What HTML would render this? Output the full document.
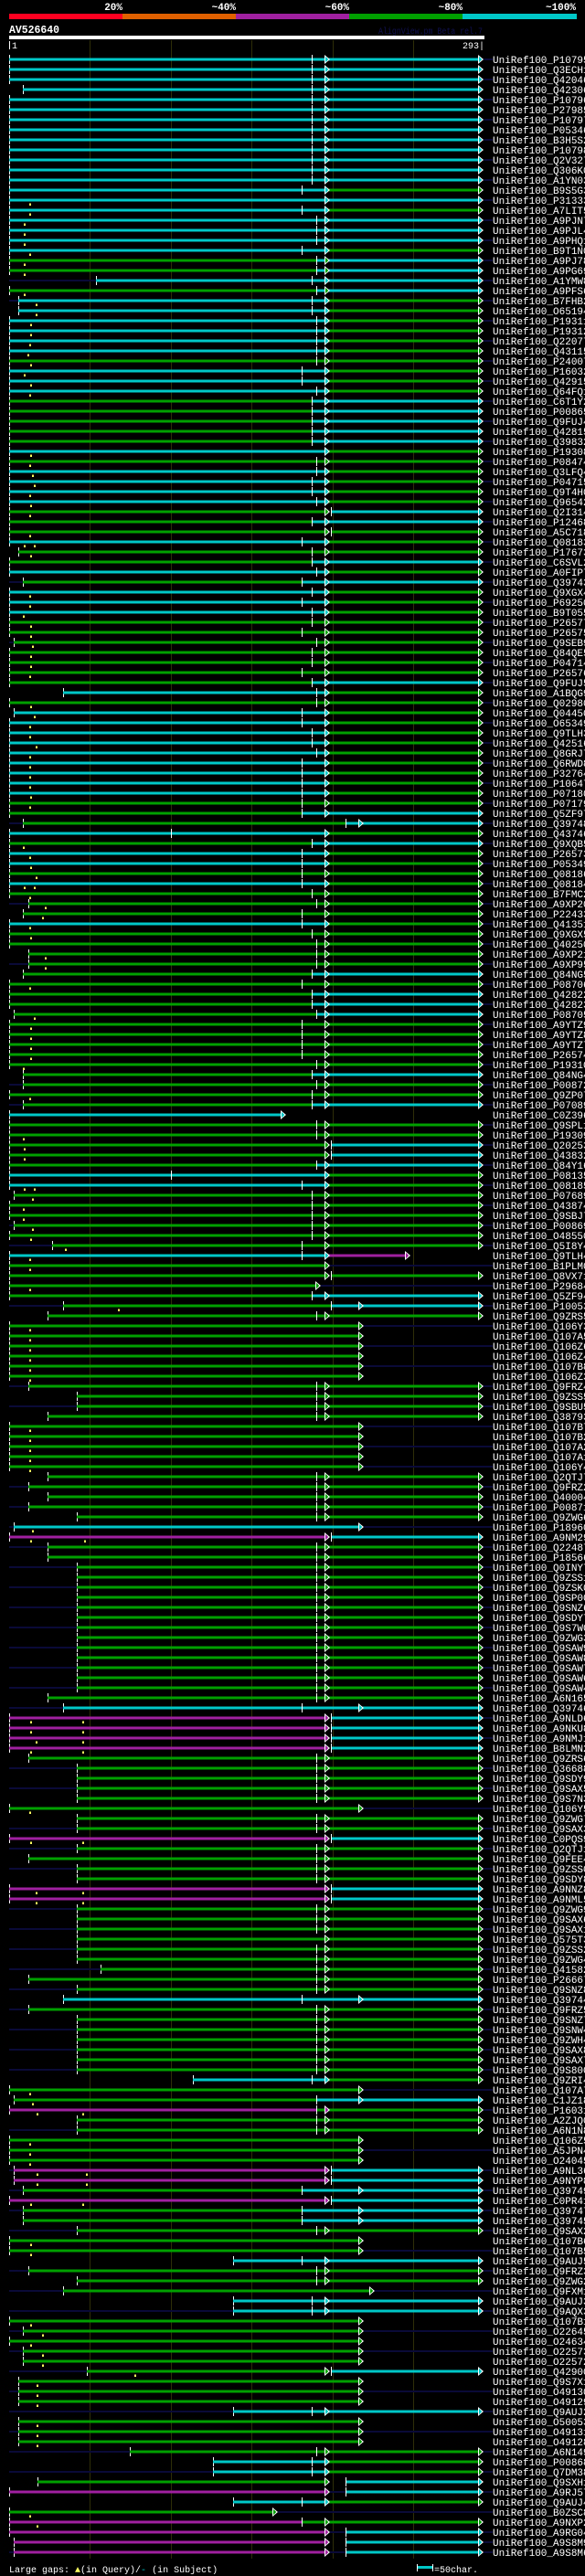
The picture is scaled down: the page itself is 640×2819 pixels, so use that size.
<!DOCTYPE html>
<html><head><meta charset="utf-8"><style>
html,body{margin:0;padding:0;background:#000;width:640px;height:2819px;overflow:hidden}
body{position:relative}
#rows{position:absolute;left:0;top:60px;width:640px}
#rows svg{display:block;width:640px;height:11px;overflow:visible}
path{fill:none}
.c{stroke:#00c8c8;stroke-width:3}
.g{stroke:#00a000;stroke-width:3}
.m{stroke:#a020a0;stroke-width:3}
.n{stroke:#0a0a38;stroke-width:2}
text{font-family:"Liberation Mono",monospace;font-size:11px;fill:#fff}
</style></head><body>
<svg width="0" height="0" style="position:absolute"><defs>
<rect id="t" x="0" y="-5" width="1" height="10" fill="#fff"/>
<g id="ac"><polygon points="0,-5 6,0 0,5" fill="#fff"/><polygon points="1,-3.3 4.3,0 1,3.3" fill="#00c8c8"/></g>
<g id="ag"><polygon points="0,-5 6,0 0,5" fill="#fff"/><polygon points="1,-3.3 4.3,0 1,3.3" fill="#00a000"/></g>
<g id="am"><polygon points="0,-5 6,0 0,5" fill="#fff"/><polygon points="1,-3.3 4.3,0 1,3.3" fill="#a020a0"/></g>
<g id="y"><rect x="0.5" y="3" width="1" height="1" fill="#ffff60"/><rect x="0" y="4" width="2" height="2" fill="#ffff60"/></g>
</defs></svg>

<svg style="position:absolute;left:0;top:0" width="640" height="2819">
<g font-family="Liberation Mono,monospace" font-weight="bold" font-size="11" fill="#fff" text-anchor="end">
<text x="134" y="11" style="font-weight:bold">20%</text>
<text x="258" y="11" style="font-weight:bold">~40%</text>
<text x="382" y="11" style="font-weight:bold">~60%</text>
<text x="506" y="11" style="font-weight:bold">~80%</text>
<text x="630" y="11" style="font-weight:bold">~100%</text>
</g>
<rect x="10" y="15" width="124" height="6" fill="#ff0020"/>
<rect x="134" y="15" width="124" height="6" fill="#e06000"/>
<rect x="258" y="15" width="124" height="6" fill="#a020a0"/>
<rect x="382" y="15" width="124" height="6" fill="#00a000"/>
<rect x="506" y="15" width="125" height="6" fill="#00c8c8"/>
<text x="10" y="36" style="font-weight:bold;font-size:12px" textLength="55" lengthAdjust="spacingAndGlyphs">AV526640</text>
<text x="414" y="37" style="fill:#101050;font-size:10px" textLength="114" lengthAdjust="spacingAndGlyphs">AlignView.pm Beta rel.7</text>
<rect x="10" y="39" width="520" height="4" fill="#fff"/>
<rect x="10" y="45" width="1" height="9" fill="#fff"/>
<text x="13" y="53" style="font-size:10px">1</text>
<text x="530" y="53" style="font-size:10px" text-anchor="end">293|</text>
<g stroke="#2e2e08" stroke-width="1">
<path d="M98.5 44V2800M187.5 44V2800M275.5 44V2800M364.5 44V2800M452.5 44V2800"/>
</g>
<text x="10" y="2815" style="font-size:10px">Large gaps: <tspan fill="#ffff60">▲</tspan>(in Query)/<tspan fill="#00c8c8">-</tspan> (in Subject)</text>
<rect x="456" y="2806" width="1" height="8" fill="#fff"/><rect x="473" y="2806" width="1" height="8" fill="#fff"/>
<rect x="457" y="2808" width="16" height="3" fill="#00c8c8"/>
<text x="475" y="2815" style="font-size:10px">=50char.</text>
</svg>

<div id="rows">
<svg viewBox="0 -5 640 11"><use href="#t" x="10"/><path class="c" d="M10 0H355M357 0H523"/><use href="#t" x="341"/><use href="#ac" x="355"/><use href="#ac" x="523"/><path class="n" d="M529 0H539"/><text x="539" y="4">UniRef100_P10795</text></svg>
<svg viewBox="0 -5 640 11"><use href="#t" x="10"/><path class="c" d="M10 0H355M357 0H523"/><use href="#t" x="341"/><use href="#ac" x="355"/><use href="#ac" x="523"/><text x="539" y="4">UniRef100_Q3ECH1</text></svg>
<svg viewBox="0 -5 640 11"><use href="#t" x="10"/><path class="c" d="M10 0H355M357 0H523"/><use href="#t" x="341"/><use href="#ac" x="355"/><use href="#ac" x="523"/><path class="n" d="M529 0H539"/><text x="539" y="4">UniRef100_Q42046</text></svg>
<svg viewBox="0 -5 640 11"><use href="#t" x="25"/><path class="c" d="M25 0H355M357 0H523"/><use href="#t" x="341"/><use href="#ac" x="355"/><use href="#ac" x="523"/><text x="539" y="4">UniRef100_Q42306</text></svg>
<svg viewBox="0 -5 640 11"><use href="#t" x="10"/><path class="c" d="M10 0H355M357 0H523"/><use href="#t" x="341"/><use href="#ac" x="355"/><use href="#ac" x="523"/><path class="n" d="M529 0H539"/><text x="539" y="4">UniRef100_P10796</text></svg>
<svg viewBox="0 -5 640 11"><use href="#t" x="10"/><path class="c" d="M10 0H355M357 0H523"/><use href="#t" x="341"/><use href="#ac" x="355"/><use href="#ac" x="523"/><text x="539" y="4">UniRef100_P27985</text></svg>
<svg viewBox="0 -5 640 11"><use href="#t" x="10"/><path class="c" d="M10 0H355M357 0H523"/><use href="#t" x="341"/><use href="#ac" x="355"/><use href="#ac" x="523"/><path class="n" d="M529 0H539"/><text x="539" y="4">UniRef100_P10797</text></svg>
<svg viewBox="0 -5 640 11"><use href="#t" x="10"/><path class="c" d="M10 0H355M357 0H523"/><use href="#t" x="341"/><use href="#ac" x="355"/><use href="#ac" x="523"/><text x="539" y="4">UniRef100_P05346</text></svg>
<svg viewBox="0 -5 640 11"><use href="#t" x="10"/><path class="c" d="M10 0H355M357 0H523"/><use href="#t" x="341"/><use href="#ac" x="355"/><use href="#ac" x="523"/><path class="n" d="M529 0H539"/><text x="539" y="4">UniRef100_B3H5S2</text></svg>
<svg viewBox="0 -5 640 11"><use href="#t" x="10"/><path class="c" d="M10 0H355M357 0H523"/><use href="#t" x="341"/><use href="#ac" x="355"/><use href="#ac" x="523"/><text x="539" y="4">UniRef100_P10798</text></svg>
<svg viewBox="0 -5 640 11"><use href="#t" x="10"/><path class="c" d="M10 0H355M357 0H523"/><use href="#t" x="341"/><use href="#ac" x="355"/><use href="#ac" x="523"/><path class="n" d="M529 0H539"/><text x="539" y="4">UniRef100_Q2V327</text></svg>
<svg viewBox="0 -5 640 11"><use href="#t" x="10"/><path class="c" d="M10 0H355M357 0H523"/><use href="#t" x="341"/><use href="#ac" x="355"/><use href="#ac" x="523"/><text x="539" y="4">UniRef100_Q306K0</text></svg>
<svg viewBox="0 -5 640 11"><use href="#t" x="10"/><path class="c" d="M10 0H355M357 0H523"/><use href="#t" x="341"/><use href="#ac" x="355"/><use href="#ac" x="523"/><path class="n" d="M529 0H539"/><text x="539" y="4">UniRef100_A1YN03</text></svg>
<svg viewBox="0 -5 640 11"><use href="#t" x="10"/><path class="c" d="M10 0H355"/><path class="g" d="M357 0H523"/><use href="#t" x="330"/><use href="#ac" x="355"/><use href="#ag" x="523"/><text x="539" y="4">UniRef100_B9S5G3</text></svg>
<svg viewBox="0 -5 640 11"><use href="#t" x="10"/><path class="c" d="M10 0H355M357 0H523"/><use href="#ac" x="355"/><use href="#ac" x="523"/><use href="#y" x="32"/><path class="n" d="M529 0H539"/><text x="539" y="4">UniRef100_P31333</text></svg>
<svg viewBox="0 -5 640 11"><use href="#t" x="10"/><path class="c" d="M10 0H355"/><path class="g" d="M357 0H523"/><use href="#t" x="330"/><use href="#ac" x="355"/><use href="#ag" x="523"/><use href="#y" x="32"/><text x="539" y="4">UniRef100_A7LIT5</text></svg>
<svg viewBox="0 -5 640 11"><use href="#t" x="10"/><path class="c" d="M10 0H355M357 0H523"/><use href="#t" x="346"/><use href="#ac" x="355"/><use href="#ac" x="523"/><use href="#y" x="26"/><path class="n" d="M529 0H539"/><text x="539" y="4">UniRef100_A9PJN7</text></svg>
<svg viewBox="0 -5 640 11"><use href="#t" x="10"/><path class="c" d="M10 0H355M357 0H523"/><use href="#t" x="346"/><use href="#ac" x="355"/><use href="#ac" x="523"/><use href="#y" x="26"/><text x="539" y="4">UniRef100_A9PJL4</text></svg>
<svg viewBox="0 -5 640 11"><use href="#t" x="10"/><path class="c" d="M10 0H355M357 0H523"/><use href="#t" x="346"/><use href="#ac" x="355"/><use href="#ac" x="523"/><use href="#y" x="26"/><path class="n" d="M529 0H539"/><text x="539" y="4">UniRef100_A9PHQ1</text></svg>
<svg viewBox="0 -5 640 11"><use href="#t" x="10"/><path class="c" d="M10 0H355"/><path class="g" d="M357 0H523"/><use href="#t" x="330"/><use href="#ac" x="355"/><use href="#ag" x="523"/><use href="#y" x="32"/><text x="539" y="4">UniRef100_B9T1N0</text></svg>
<svg viewBox="0 -5 640 11"><use href="#t" x="10"/><path class="g" d="M10 0H346"/><path class="c" d="M346 0H355M357 0H523"/><use href="#t" x="346"/><use href="#ag" x="355"/><use href="#ac" x="523"/><use href="#y" x="26"/><path class="n" d="M529 0H539"/><text x="539" y="4">UniRef100_A9PJ78</text></svg>
<svg viewBox="0 -5 640 11"><use href="#t" x="10"/><path class="g" d="M10 0H346"/><path class="c" d="M346 0H355M357 0H523"/><use href="#t" x="346"/><use href="#ag" x="355"/><use href="#ac" x="523"/><use href="#y" x="26"/><text x="539" y="4">UniRef100_A9PG69</text></svg>
<svg viewBox="0 -5 640 11"><path class="n" d="M10 0H105"/><use href="#t" x="105"/><path class="c" d="M105 0H355M357 0H523"/><use href="#t" x="341"/><use href="#ac" x="355"/><use href="#ac" x="523"/><path class="n" d="M529 0H539"/><text x="539" y="4">UniRef100_A1YMW8</text></svg>
<svg viewBox="0 -5 640 11"><use href="#t" x="10"/><path class="g" d="M10 0H346"/><path class="c" d="M346 0H355M357 0H523"/><use href="#t" x="346"/><use href="#ag" x="355"/><use href="#ac" x="523"/><use href="#y" x="26"/><text x="539" y="4">UniRef100_A9PFS6</text></svg>
<svg viewBox="0 -5 640 11"><path class="n" d="M10 0H20"/><use href="#t" x="20"/><path class="c" d="M20 0H355"/><path class="g" d="M357 0H523"/><use href="#t" x="341"/><use href="#ac" x="355"/><use href="#ag" x="523"/><use href="#y" x="39"/><path class="n" d="M529 0H539"/><text x="539" y="4">UniRef100_B7FHB2</text></svg>
<svg viewBox="0 -5 640 11"><use href="#t" x="20"/><path class="c" d="M20 0H355"/><path class="g" d="M357 0H523"/><use href="#t" x="341"/><use href="#ac" x="355"/><use href="#ag" x="523"/><use href="#y" x="39"/><text x="539" y="4">UniRef100_O65194</text></svg>
<svg viewBox="0 -5 640 11"><use href="#t" x="10"/><path class="c" d="M10 0H355"/><path class="g" d="M357 0H523"/><use href="#t" x="346"/><use href="#ac" x="355"/><use href="#ag" x="523"/><use href="#y" x="33"/><path class="n" d="M529 0H539"/><text x="539" y="4">UniRef100_P19311</text></svg>
<svg viewBox="0 -5 640 11"><use href="#t" x="10"/><path class="c" d="M10 0H355"/><path class="g" d="M357 0H523"/><use href="#t" x="346"/><use href="#ac" x="355"/><use href="#ag" x="523"/><use href="#y" x="33"/><text x="539" y="4">UniRef100_P19312</text></svg>
<svg viewBox="0 -5 640 11"><use href="#t" x="10"/><path class="c" d="M10 0H355"/><path class="g" d="M357 0H523"/><use href="#t" x="346"/><use href="#ac" x="355"/><use href="#ag" x="523"/><use href="#y" x="32"/><path class="n" d="M529 0H539"/><text x="539" y="4">UniRef100_Q22077</text></svg>
<svg viewBox="0 -5 640 11"><use href="#t" x="10"/><path class="c" d="M10 0H355"/><path class="g" d="M357 0H523"/><use href="#t" x="346"/><use href="#ac" x="355"/><use href="#ag" x="523"/><use href="#y" x="30"/><text x="539" y="4">UniRef100_Q43115</text></svg>
<svg viewBox="0 -5 640 11"><use href="#t" x="10"/><path class="g" d="M10 0H355M357 0H523"/><use href="#t" x="346"/><use href="#ag" x="355"/><use href="#ag" x="523"/><use href="#y" x="33"/><path class="n" d="M529 0H539"/><text x="539" y="4">UniRef100_P24007</text></svg>
<svg viewBox="0 -5 640 11"><use href="#t" x="10"/><path class="c" d="M10 0H355"/><path class="g" d="M357 0H523"/><use href="#t" x="330"/><use href="#ac" x="355"/><use href="#ag" x="523"/><use href="#y" x="26"/><text x="539" y="4">UniRef100_P16032</text></svg>
<svg viewBox="0 -5 640 11"><use href="#t" x="10"/><path class="c" d="M10 0H355"/><path class="g" d="M357 0H523"/><use href="#t" x="330"/><use href="#ac" x="355"/><use href="#ag" x="523"/><use href="#y" x="33"/><path class="n" d="M529 0H539"/><text x="539" y="4">UniRef100_Q42915</text></svg>
<svg viewBox="0 -5 640 11"><use href="#t" x="10"/><path class="c" d="M10 0H355"/><path class="g" d="M357 0H523"/><use href="#t" x="346"/><use href="#ac" x="355"/><use href="#ag" x="523"/><use href="#y" x="32"/><text x="539" y="4">UniRef100_Q64FQ1</text></svg>
<svg viewBox="0 -5 640 11"><use href="#t" x="10"/><path class="g" d="M10 0H341"/><path class="c" d="M341 0H355M357 0H523"/><use href="#t" x="341"/><use href="#ac" x="355"/><use href="#ac" x="523"/><path class="n" d="M529 0H539"/><text x="539" y="4">UniRef100_C6T1Y2</text></svg>
<svg viewBox="0 -5 640 11"><use href="#t" x="10"/><path class="g" d="M10 0H341"/><path class="c" d="M341 0H355M357 0H523"/><use href="#t" x="341"/><use href="#ac" x="355"/><use href="#ac" x="523"/><text x="539" y="4">UniRef100_P00865</text></svg>
<svg viewBox="0 -5 640 11"><use href="#t" x="10"/><path class="g" d="M10 0H341"/><path class="c" d="M341 0H355M357 0H523"/><use href="#t" x="341"/><use href="#ac" x="355"/><use href="#ac" x="523"/><path class="n" d="M529 0H539"/><text x="539" y="4">UniRef100_Q9FUJ4</text></svg>
<svg viewBox="0 -5 640 11"><use href="#t" x="10"/><path class="g" d="M10 0H341"/><path class="c" d="M341 0H355M357 0H523"/><use href="#t" x="341"/><use href="#ac" x="355"/><use href="#ac" x="523"/><text x="539" y="4">UniRef100_Q42815</text></svg>
<svg viewBox="0 -5 640 11"><use href="#t" x="10"/><path class="g" d="M10 0H341"/><path class="c" d="M341 0H355M357 0H523"/><use href="#t" x="341"/><use href="#ac" x="355"/><use href="#ac" x="523"/><path class="n" d="M529 0H539"/><text x="539" y="4">UniRef100_Q39832</text></svg>
<svg viewBox="0 -5 640 11"><use href="#t" x="10"/><path class="c" d="M10 0H355"/><path class="g" d="M357 0H523"/><use href="#ac" x="355"/><use href="#ag" x="523"/><use href="#y" x="33"/><text x="539" y="4">UniRef100_P19308</text></svg>
<svg viewBox="0 -5 640 11"><use href="#t" x="10"/><path class="g" d="M10 0H355M357 0H523"/><use href="#t" x="346"/><use href="#ag" x="355"/><use href="#ag" x="523"/><use href="#y" x="32"/><path class="n" d="M529 0H539"/><text x="539" y="4">UniRef100_P08474</text></svg>
<svg viewBox="0 -5 640 11"><use href="#t" x="10"/><path class="c" d="M10 0H355"/><path class="g" d="M357 0H523"/><use href="#t" x="346"/><use href="#ac" x="355"/><use href="#ag" x="523"/><use href="#y" x="35"/><text x="539" y="4">UniRef100_Q3LFQ4</text></svg>
<svg viewBox="0 -5 640 11"><use href="#t" x="10"/><path class="c" d="M10 0H355"/><path class="g" d="M357 0H523"/><use href="#t" x="341"/><use href="#ac" x="355"/><use href="#ag" x="523"/><use href="#y" x="37"/><path class="n" d="M529 0H539"/><text x="539" y="4">UniRef100_P04715</text></svg>
<svg viewBox="0 -5 640 11"><use href="#t" x="10"/><path class="c" d="M10 0H355"/><path class="g" d="M357 0H523"/><use href="#t" x="341"/><use href="#ac" x="355"/><use href="#ag" x="523"/><use href="#y" x="32"/><text x="539" y="4">UniRef100_Q9T4H0</text></svg>
<svg viewBox="0 -5 640 11"><use href="#t" x="10"/><path class="c" d="M10 0H355"/><path class="g" d="M357 0H523"/><use href="#t" x="346"/><use href="#ac" x="355"/><use href="#ag" x="523"/><use href="#y" x="33"/><path class="n" d="M529 0H539"/><text x="539" y="4">UniRef100_Q96542</text></svg>
<svg viewBox="0 -5 640 11"><use href="#t" x="10"/><path class="g" d="M10 0H355"/><path class="c" d="M362 0H523"/><use href="#t" x="362"/><use href="#ag" x="355"/><use href="#ac" x="523"/><use href="#y" x="32"/><text x="539" y="4">UniRef100_Q2I314</text></svg>
<svg viewBox="0 -5 640 11"><use href="#t" x="10"/><path class="g" d="M10 0H341"/><path class="c" d="M341 0H355M357 0H523"/><use href="#t" x="341"/><use href="#ac" x="355"/><use href="#ac" x="523"/><path class="n" d="M529 0H539"/><text x="539" y="4">UniRef100_P12468</text></svg>
<svg viewBox="0 -5 640 11"><use href="#t" x="10"/><path class="g" d="M10 0H355M362 0H523"/><use href="#t" x="362"/><use href="#ag" x="355"/><use href="#ag" x="523"/><use href="#y" x="32"/><text x="539" y="4">UniRef100_A5C718</text></svg>
<svg viewBox="0 -5 640 11"><use href="#t" x="10"/><path class="c" d="M10 0H355"/><path class="g" d="M357 0H523"/><use href="#t" x="330"/><use href="#ac" x="355"/><use href="#ag" x="523"/><use href="#y" x="26"/><use href="#y" x="37"/><path class="n" d="M529 0H539"/><text x="539" y="4">UniRef100_Q08183</text></svg>
<svg viewBox="0 -5 640 11"><use href="#t" x="20"/><path class="g" d="M20 0H355M357 0H523"/><use href="#t" x="341"/><use href="#ag" x="355"/><use href="#ag" x="523"/><use href="#y" x="33"/><text x="539" y="4">UniRef100_P17673</text></svg>
<svg viewBox="0 -5 640 11"><use href="#t" x="10"/><path class="g" d="M10 0H341"/><path class="c" d="M341 0H355M357 0H523"/><use href="#t" x="341"/><use href="#ac" x="355"/><use href="#ac" x="523"/><path class="n" d="M529 0H539"/><text x="539" y="4">UniRef100_C6SVL2</text></svg>
<svg viewBox="0 -5 640 11"><use href="#t" x="10"/><path class="c" d="M10 0H355"/><path class="g" d="M357 0H523"/><use href="#t" x="346"/><use href="#ac" x="355"/><use href="#ag" x="523"/><text x="539" y="4">UniRef100_A0FIP7</text></svg>
<svg viewBox="0 -5 640 11"><path class="n" d="M10 0H25"/><use href="#t" x="25"/><path class="g" d="M25 0H330"/><path class="c" d="M330 0H523"/><use href="#t" x="330"/><use href="#ac" x="355"/><use href="#ac" x="523"/><path class="n" d="M529 0H539"/><text x="539" y="4">UniRef100_Q39743</text></svg>
<svg viewBox="0 -5 640 11"><use href="#t" x="10"/><path class="c" d="M10 0H355"/><path class="g" d="M357 0H523"/><use href="#t" x="341"/><use href="#ac" x="355"/><use href="#ag" x="523"/><use href="#y" x="32"/><text x="539" y="4">UniRef100_Q9XGX4</text></svg>
<svg viewBox="0 -5 640 11"><use href="#t" x="10"/><path class="c" d="M10 0H355"/><path class="g" d="M357 0H523"/><use href="#t" x="330"/><use href="#ac" x="355"/><use href="#ag" x="523"/><use href="#y" x="32"/><path class="n" d="M529 0H539"/><text x="539" y="4">UniRef100_P69250</text></svg>
<svg viewBox="0 -5 640 11"><use href="#t" x="10"/><path class="c" d="M10 0H355"/><path class="g" d="M357 0H523"/><use href="#t" x="341"/><use href="#ac" x="355"/><use href="#ag" x="523"/><use href="#y" x="25"/><text x="539" y="4">UniRef100_B9T055</text></svg>
<svg viewBox="0 -5 640 11"><use href="#t" x="10"/><path class="g" d="M10 0H355M357 0H523"/><use href="#t" x="341"/><use href="#ag" x="355"/><use href="#ag" x="523"/><use href="#y" x="33"/><path class="n" d="M529 0H539"/><text x="539" y="4">UniRef100_P26577</text></svg>
<svg viewBox="0 -5 640 11"><use href="#t" x="10"/><path class="g" d="M10 0H355M357 0H523"/><use href="#t" x="330"/><use href="#ag" x="355"/><use href="#ag" x="523"/><use href="#y" x="33"/><text x="539" y="4">UniRef100_P26575</text></svg>
<svg viewBox="0 -5 640 11"><path class="n" d="M10 0H15"/><use href="#t" x="15"/><path class="g" d="M15 0H355M357 0H523"/><use href="#t" x="346"/><use href="#ag" x="355"/><use href="#ag" x="523"/><use href="#y" x="35"/><path class="n" d="M529 0H539"/><text x="539" y="4">UniRef100_Q9SEB9</text></svg>
<svg viewBox="0 -5 640 11"><use href="#t" x="10"/><path class="g" d="M10 0H355M357 0H523"/><use href="#t" x="341"/><use href="#ag" x="355"/><use href="#ag" x="523"/><use href="#y" x="33"/><text x="539" y="4">UniRef100_Q84QE5</text></svg>
<svg viewBox="0 -5 640 11"><use href="#t" x="10"/><path class="g" d="M10 0H355M357 0H523"/><use href="#t" x="341"/><use href="#ag" x="355"/><use href="#ag" x="523"/><use href="#y" x="33"/><path class="n" d="M529 0H539"/><text x="539" y="4">UniRef100_P04714</text></svg>
<svg viewBox="0 -5 640 11"><use href="#t" x="10"/><path class="g" d="M10 0H355M357 0H523"/><use href="#t" x="330"/><use href="#ag" x="355"/><use href="#ag" x="523"/><use href="#y" x="32"/><text x="539" y="4">UniRef100_P26576</text></svg>
<svg viewBox="0 -5 640 11"><use href="#t" x="10"/><path class="g" d="M10 0H341"/><path class="c" d="M341 0H355M357 0H523"/><use href="#t" x="341"/><use href="#ac" x="355"/><use href="#ac" x="523"/><path class="n" d="M529 0H539"/><text x="539" y="4">UniRef100_Q9FUJ5</text></svg>
<svg viewBox="0 -5 640 11"><use href="#t" x="69"/><path class="c" d="M69 0H355"/><path class="g" d="M357 0H523"/><use href="#t" x="346"/><use href="#ac" x="355"/><use href="#ag" x="523"/><text x="539" y="4">UniRef100_A1BQG9</text></svg>
<svg viewBox="0 -5 640 11"><use href="#t" x="10"/><path class="g" d="M10 0H355M357 0H523"/><use href="#t" x="346"/><use href="#ag" x="355"/><use href="#ag" x="523"/><use href="#y" x="33"/><path class="n" d="M529 0H539"/><text x="539" y="4">UniRef100_Q02980</text></svg>
<svg viewBox="0 -5 640 11"><use href="#t" x="15"/><path class="c" d="M15 0H355"/><path class="g" d="M357 0H523"/><use href="#t" x="330"/><use href="#ac" x="355"/><use href="#ag" x="523"/><use href="#y" x="37"/><text x="539" y="4">UniRef100_Q04450</text></svg>
<svg viewBox="0 -5 640 11"><use href="#t" x="10"/><path class="c" d="M10 0H355"/><path class="g" d="M357 0H523"/><use href="#t" x="330"/><use href="#ac" x="355"/><use href="#ag" x="523"/><use href="#y" x="32"/><path class="n" d="M529 0H539"/><text x="539" y="4">UniRef100_O65349</text></svg>
<svg viewBox="0 -5 640 11"><use href="#t" x="10"/><path class="c" d="M10 0H355"/><path class="g" d="M357 0H523"/><use href="#t" x="341"/><use href="#ac" x="355"/><use href="#ag" x="523"/><use href="#y" x="32"/><text x="539" y="4">UniRef100_Q9TLH3</text></svg>
<svg viewBox="0 -5 640 11"><use href="#t" x="10"/><path class="c" d="M10 0H355"/><path class="g" d="M357 0H523"/><use href="#t" x="341"/><use href="#ac" x="355"/><use href="#ag" x="523"/><use href="#y" x="39"/><path class="n" d="M529 0H539"/><text x="539" y="4">UniRef100_Q42516</text></svg>
<svg viewBox="0 -5 640 11"><use href="#t" x="10"/><path class="c" d="M10 0H355"/><path class="g" d="M357 0H523"/><use href="#t" x="346"/><use href="#ac" x="355"/><use href="#ag" x="523"/><use href="#y" x="32"/><text x="539" y="4">UniRef100_Q8GRJ7</text></svg>
<svg viewBox="0 -5 640 11"><use href="#t" x="10"/><path class="c" d="M10 0H355"/><path class="g" d="M357 0H523"/><use href="#t" x="330"/><use href="#ac" x="355"/><use href="#ag" x="523"/><use href="#y" x="32"/><path class="n" d="M529 0H539"/><text x="539" y="4">UniRef100_Q6RWD8</text></svg>
<svg viewBox="0 -5 640 11"><use href="#t" x="10"/><path class="c" d="M10 0H355"/><path class="g" d="M357 0H523"/><use href="#t" x="330"/><use href="#ac" x="355"/><use href="#ag" x="523"/><use href="#y" x="32"/><text x="539" y="4">UniRef100_P32764</text></svg>
<svg viewBox="0 -5 640 11"><use href="#t" x="10"/><path class="c" d="M10 0H355"/><path class="g" d="M357 0H523"/><use href="#t" x="330"/><use href="#ac" x="355"/><use href="#ag" x="523"/><use href="#y" x="32"/><path class="n" d="M529 0H539"/><text x="539" y="4">UniRef100_P10647</text></svg>
<svg viewBox="0 -5 640 11"><use href="#t" x="10"/><path class="c" d="M10 0H355"/><path class="g" d="M357 0H523"/><use href="#t" x="330"/><use href="#ac" x="355"/><use href="#ag" x="523"/><use href="#y" x="33"/><text x="539" y="4">UniRef100_P07180</text></svg>
<svg viewBox="0 -5 640 11"><use href="#t" x="10"/><path class="g" d="M10 0H355M357 0H523"/><use href="#t" x="330"/><use href="#ag" x="355"/><use href="#ag" x="523"/><use href="#y" x="32"/><path class="n" d="M529 0H539"/><text x="539" y="4">UniRef100_P07179</text></svg>
<svg viewBox="0 -5 640 11"><use href="#t" x="10"/><path class="g" d="M10 0H330"/><path class="c" d="M330 0H355M357 0H523"/><use href="#t" x="330"/><use href="#ac" x="355"/><use href="#ac" x="523"/><text x="539" y="4">UniRef100_Q5ZF97</text></svg>
<svg viewBox="0 -5 640 11"><path class="n" d="M10 0H25"/><use href="#t" x="25"/><path class="g" d="M25 0H378"/><path class="c" d="M378 0H523"/><use href="#t" x="378"/><use href="#ac" x="392"/><use href="#ac" x="523"/><path class="n" d="M529 0H539"/><text x="539" y="4">UniRef100_Q39748</text></svg>
<svg viewBox="0 -5 640 11"><use href="#t" x="10"/><path class="c" d="M10 0H355"/><path class="g" d="M357 0H523"/><use href="#t" x="187"/><use href="#ac" x="355"/><use href="#ag" x="523"/><text x="539" y="4">UniRef100_Q43746</text></svg>
<svg viewBox="0 -5 640 11"><use href="#t" x="10"/><path class="g" d="M10 0H341"/><path class="c" d="M341 0H355M357 0H523"/><use href="#t" x="341"/><use href="#ac" x="355"/><use href="#ac" x="523"/><use href="#y" x="25"/><path class="n" d="M529 0H539"/><text x="539" y="4">UniRef100_Q9XQB5</text></svg>
<svg viewBox="0 -5 640 11"><use href="#t" x="10"/><path class="c" d="M10 0H355"/><path class="g" d="M357 0H523"/><use href="#t" x="330"/><use href="#ac" x="355"/><use href="#ag" x="523"/><use href="#y" x="32"/><text x="539" y="4">UniRef100_P26573</text></svg>
<svg viewBox="0 -5 640 11"><use href="#t" x="10"/><path class="c" d="M10 0H355"/><path class="g" d="M357 0H523"/><use href="#t" x="330"/><use href="#ac" x="355"/><use href="#ag" x="523"/><use href="#y" x="33"/><path class="n" d="M529 0H539"/><text x="539" y="4">UniRef100_P05349</text></svg>
<svg viewBox="0 -5 640 11"><use href="#t" x="10"/><path class="g" d="M10 0H355M357 0H523"/><use href="#t" x="330"/><use href="#ag" x="355"/><use href="#ag" x="523"/><use href="#y" x="39"/><text x="539" y="4">UniRef100_Q08186</text></svg>
<svg viewBox="0 -5 640 11"><use href="#t" x="10"/><path class="c" d="M10 0H355"/><path class="g" d="M357 0H523"/><use href="#t" x="330"/><use href="#ac" x="355"/><use href="#ag" x="523"/><use href="#y" x="26"/><use href="#y" x="37"/><path class="n" d="M529 0H539"/><text x="539" y="4">UniRef100_Q08184</text></svg>
<svg viewBox="0 -5 640 11"><use href="#t" x="10"/><path class="g" d="M10 0H355M357 0H523"/><use href="#t" x="341"/><use href="#ag" x="355"/><use href="#ag" x="523"/><use href="#y" x="32"/><text x="539" y="4">UniRef100_B7FMC2</text></svg>
<svg viewBox="0 -5 640 11"><path class="n" d="M10 0H31"/><use href="#t" x="31"/><path class="g" d="M31 0H355M357 0H523"/><use href="#t" x="346"/><use href="#ag" x="355"/><use href="#ag" x="523"/><use href="#y" x="49"/><path class="n" d="M529 0H539"/><text x="539" y="4">UniRef100_A9XP20</text></svg>
<svg viewBox="0 -5 640 11"><use href="#t" x="25"/><path class="g" d="M25 0H355M357 0H523"/><use href="#t" x="330"/><use href="#ag" x="355"/><use href="#ag" x="523"/><use href="#y" x="46"/><text x="539" y="4">UniRef100_P22433</text></svg>
<svg viewBox="0 -5 640 11"><use href="#t" x="10"/><path class="c" d="M10 0H355"/><path class="g" d="M357 0H523"/><use href="#t" x="330"/><use href="#ac" x="355"/><use href="#ag" x="523"/><use href="#y" x="32"/><path class="n" d="M529 0H539"/><text x="539" y="4">UniRef100_Q41351</text></svg>
<svg viewBox="0 -5 640 11"><use href="#t" x="10"/><path class="g" d="M10 0H355M357 0H523"/><use href="#t" x="341"/><use href="#ag" x="355"/><use href="#ag" x="523"/><use href="#y" x="33"/><text x="539" y="4">UniRef100_Q9XGX5</text></svg>
<svg viewBox="0 -5 640 11"><use href="#t" x="10"/><path class="g" d="M10 0H355M357 0H523"/><use href="#t" x="346"/><use href="#ag" x="355"/><use href="#ag" x="523"/><path class="n" d="M529 0H539"/><text x="539" y="4">UniRef100_Q40250</text></svg>
<svg viewBox="0 -5 640 11"><use href="#t" x="31"/><path class="g" d="M31 0H355M357 0H523"/><use href="#t" x="346"/><use href="#ag" x="355"/><use href="#ag" x="523"/><use href="#y" x="49"/><text x="539" y="4">UniRef100_A9XP21</text></svg>
<svg viewBox="0 -5 640 11"><path class="n" d="M10 0H31"/><use href="#t" x="31"/><path class="g" d="M31 0H355M357 0H523"/><use href="#t" x="346"/><use href="#ag" x="355"/><use href="#ag" x="523"/><use href="#y" x="49"/><path class="n" d="M529 0H539"/><text x="539" y="4">UniRef100_A9XP95</text></svg>
<svg viewBox="0 -5 640 11"><use href="#t" x="25"/><path class="g" d="M25 0H341"/><path class="c" d="M341 0H355M357 0H523"/><use href="#t" x="341"/><use href="#ac" x="355"/><use href="#ac" x="523"/><text x="539" y="4">UniRef100_Q84NG5</text></svg>
<svg viewBox="0 -5 640 11"><use href="#t" x="10"/><path class="g" d="M10 0H355M357 0H523"/><use href="#t" x="330"/><use href="#ag" x="355"/><use href="#ag" x="523"/><use href="#y" x="32"/><path class="n" d="M529 0H539"/><text x="539" y="4">UniRef100_P08706</text></svg>
<svg viewBox="0 -5 640 11"><use href="#t" x="10"/><path class="g" d="M10 0H341"/><path class="c" d="M341 0H355M357 0H523"/><use href="#t" x="341"/><use href="#ac" x="355"/><use href="#ac" x="523"/><text x="539" y="4">UniRef100_Q42822</text></svg>
<svg viewBox="0 -5 640 11"><use href="#t" x="10"/><path class="g" d="M10 0H341"/><path class="c" d="M341 0H355M357 0H523"/><use href="#t" x="341"/><use href="#ac" x="355"/><use href="#ac" x="523"/><path class="n" d="M529 0H539"/><text x="539" y="4">UniRef100_Q42823</text></svg>
<svg viewBox="0 -5 640 11"><use href="#t" x="15"/><path class="g" d="M15 0H346"/><path class="c" d="M346 0H355M357 0H523"/><use href="#t" x="346"/><use href="#ac" x="355"/><use href="#ac" x="523"/><use href="#y" x="37"/><text x="539" y="4">UniRef100_P08705</text></svg>
<svg viewBox="0 -5 640 11"><use href="#t" x="10"/><path class="g" d="M10 0H355M357 0H523"/><use href="#t" x="330"/><use href="#ag" x="355"/><use href="#ag" x="523"/><use href="#y" x="33"/><path class="n" d="M529 0H539"/><text x="539" y="4">UniRef100_A9YTZ9</text></svg>
<svg viewBox="0 -5 640 11"><use href="#t" x="10"/><path class="g" d="M10 0H355M357 0H523"/><use href="#t" x="330"/><use href="#ag" x="355"/><use href="#ag" x="523"/><use href="#y" x="33"/><text x="539" y="4">UniRef100_A9YTZ8</text></svg>
<svg viewBox="0 -5 640 11"><use href="#t" x="10"/><path class="g" d="M10 0H355M357 0H523"/><use href="#t" x="330"/><use href="#ag" x="355"/><use href="#ag" x="523"/><use href="#y" x="33"/><path class="n" d="M529 0H539"/><text x="539" y="4">UniRef100_A9YTZ7</text></svg>
<svg viewBox="0 -5 640 11"><use href="#t" x="10"/><path class="g" d="M10 0H355M357 0H523"/><use href="#t" x="330"/><use href="#ag" x="355"/><use href="#ag" x="523"/><use href="#y" x="33"/><text x="539" y="4">UniRef100_P26574</text></svg>
<svg viewBox="0 -5 640 11"><use href="#t" x="10"/><path class="g" d="M10 0H355M357 0H523"/><use href="#t" x="346"/><use href="#ag" x="355"/><use href="#ag" x="523"/><use href="#y" x="25"/><path class="n" d="M529 0H539"/><text x="539" y="4">UniRef100_P19310</text></svg>
<svg viewBox="0 -5 640 11"><use href="#t" x="25"/><path class="g" d="M25 0H341"/><path class="c" d="M341 0H355M357 0H523"/><use href="#t" x="341"/><use href="#ac" x="355"/><use href="#ac" x="523"/><text x="539" y="4">UniRef100_Q84NG4</text></svg>
<svg viewBox="0 -5 640 11"><path class="n" d="M10 0H25"/><use href="#t" x="25"/><path class="g" d="M25 0H355M357 0H523"/><use href="#t" x="346"/><use href="#ag" x="355"/><use href="#ag" x="523"/><path class="n" d="M529 0H539"/><text x="539" y="4">UniRef100_P00872</text></svg>
<svg viewBox="0 -5 640 11"><use href="#t" x="10"/><path class="g" d="M10 0H355M357 0H523"/><use href="#t" x="341"/><use href="#ag" x="355"/><use href="#ag" x="523"/><use href="#y" x="32"/><text x="539" y="4">UniRef100_Q9ZP07</text></svg>
<svg viewBox="0 -5 640 11"><path class="n" d="M10 0H25"/><use href="#t" x="25"/><path class="g" d="M25 0H341"/><path class="c" d="M341 0H355M357 0H523"/><use href="#t" x="341"/><use href="#ac" x="355"/><use href="#ac" x="523"/><path class="n" d="M529 0H539"/><text x="539" y="4">UniRef100_P07089</text></svg>
<svg viewBox="0 -5 640 11"><use href="#t" x="10"/><path class="c" d="M10 0H307"/><use href="#ac" x="307"/><text x="539" y="4">UniRef100_C0Z396</text></svg>
<svg viewBox="0 -5 640 11"><use href="#t" x="10"/><path class="g" d="M10 0H355M357 0H523"/><use href="#t" x="346"/><use href="#ag" x="355"/><use href="#ag" x="523"/><path class="n" d="M529 0H539"/><text x="539" y="4">UniRef100_Q9SPL1</text></svg>
<svg viewBox="0 -5 640 11"><use href="#t" x="10"/><path class="g" d="M10 0H355M357 0H523"/><use href="#t" x="346"/><use href="#ag" x="355"/><use href="#ag" x="523"/><use href="#y" x="25"/><text x="539" y="4">UniRef100_P19309</text></svg>
<svg viewBox="0 -5 640 11"><use href="#t" x="10"/><path class="g" d="M10 0H355"/><path class="c" d="M362 0H523"/><use href="#t" x="362"/><use href="#ag" x="355"/><use href="#ac" x="523"/><use href="#y" x="26"/><path class="n" d="M529 0H539"/><text x="539" y="4">UniRef100_Q20253</text></svg>
<svg viewBox="0 -5 640 11"><use href="#t" x="10"/><path class="g" d="M10 0H355"/><path class="c" d="M362 0H523"/><use href="#t" x="362"/><use href="#ag" x="355"/><use href="#ac" x="523"/><use href="#y" x="26"/><text x="539" y="4">UniRef100_Q43832</text></svg>
<svg viewBox="0 -5 640 11"><use href="#t" x="10"/><path class="g" d="M10 0H346"/><path class="c" d="M346 0H355M357 0H523"/><use href="#t" x="346"/><use href="#ac" x="355"/><use href="#ac" x="523"/><path class="n" d="M529 0H539"/><text x="539" y="4">UniRef100_Q84Y16</text></svg>
<svg viewBox="0 -5 640 11"><use href="#t" x="10"/><path class="c" d="M10 0H355"/><path class="g" d="M357 0H523"/><use href="#t" x="187"/><use href="#ac" x="355"/><use href="#ag" x="523"/><text x="539" y="4">UniRef100_P08135</text></svg>
<svg viewBox="0 -5 640 11"><use href="#t" x="10"/><path class="c" d="M10 0H355"/><path class="g" d="M357 0H523"/><use href="#t" x="330"/><use href="#ac" x="355"/><use href="#ag" x="523"/><use href="#y" x="26"/><use href="#y" x="37"/><path class="n" d="M529 0H539"/><text x="539" y="4">UniRef100_Q08185</text></svg>
<svg viewBox="0 -5 640 11"><use href="#t" x="15"/><path class="g" d="M15 0H355M357 0H523"/><use href="#t" x="341"/><use href="#ag" x="355"/><use href="#ag" x="523"/><use href="#y" x="35"/><text x="539" y="4">UniRef100_P07689</text></svg>
<svg viewBox="0 -5 640 11"><use href="#t" x="10"/><path class="g" d="M10 0H355M357 0H523"/><use href="#t" x="341"/><use href="#ag" x="355"/><use href="#ag" x="523"/><use href="#y" x="25"/><path class="n" d="M529 0H539"/><text x="539" y="4">UniRef100_Q43874</text></svg>
<svg viewBox="0 -5 640 11"><use href="#t" x="10"/><path class="g" d="M10 0H355M357 0H523"/><use href="#t" x="341"/><use href="#ag" x="355"/><use href="#ag" x="523"/><use href="#y" x="25"/><text x="539" y="4">UniRef100_Q9SBJ7</text></svg>
<svg viewBox="0 -5 640 11"><path class="n" d="M10 0H15"/><use href="#t" x="15"/><path class="g" d="M15 0H355M357 0H523"/><use href="#t" x="341"/><use href="#ag" x="355"/><use href="#ag" x="523"/><use href="#y" x="35"/><path class="n" d="M529 0H539"/><text x="539" y="4">UniRef100_P00869</text></svg>
<svg viewBox="0 -5 640 11"><use href="#t" x="10"/><path class="g" d="M10 0H355M357 0H523"/><use href="#t" x="341"/><use href="#ag" x="355"/><use href="#ag" x="523"/><use href="#y" x="33"/><text x="539" y="4">UniRef100_O48550</text></svg>
<svg viewBox="0 -5 640 11"><path class="n" d="M10 0H57"/><use href="#t" x="57"/><path class="g" d="M57 0H355M357 0H523"/><use href="#t" x="330"/><use href="#ag" x="355"/><use href="#ag" x="523"/><use href="#y" x="71"/><path class="n" d="M529 0H539"/><text x="539" y="4">UniRef100_Q5I8Y4</text></svg>
<svg viewBox="0 -5 640 11"><use href="#t" x="10"/><path class="c" d="M10 0H355"/><path class="m" d="M357 0H443"/><use href="#t" x="330"/><use href="#ac" x="355"/><use href="#am" x="443"/><use href="#y" x="32"/><text x="539" y="4">UniRef100_Q9TLH4</text></svg>
<svg viewBox="0 -5 640 11"><use href="#t" x="10"/><path class="g" d="M10 0H355"/><use href="#ag" x="355"/><path class="n" d="M361 0H539"/><use href="#y" x="32"/><text x="539" y="4">UniRef100_B1PLM0</text></svg>
<svg viewBox="0 -5 640 11"><use href="#t" x="10"/><path class="g" d="M10 0H355M362 0H523"/><use href="#t" x="362"/><use href="#ag" x="355"/><use href="#ag" x="523"/><text x="539" y="4">UniRef100_Q8VX71</text></svg>
<svg viewBox="0 -5 640 11"><use href="#t" x="10"/><path class="g" d="M10 0H345"/><use href="#ag" x="345"/><path class="n" d="M351 0H539"/><use href="#y" x="32"/><text x="539" y="4">UniRef100_P29684</text></svg>
<svg viewBox="0 -5 640 11"><use href="#t" x="10"/><path class="g" d="M10 0H341"/><path class="c" d="M341 0H355M357 0H523"/><use href="#t" x="341"/><use href="#ac" x="355"/><use href="#ac" x="523"/><text x="539" y="4">UniRef100_Q5ZF94</text></svg>
<svg viewBox="0 -5 640 11"><path class="n" d="M10 0H69"/><use href="#t" x="69"/><path class="g" d="M69 0H362"/><path class="c" d="M362 0H523"/><use href="#t" x="362"/><use href="#ac" x="392"/><use href="#ac" x="523"/><use href="#y" x="129"/><path class="n" d="M529 0H539"/><text x="539" y="4">UniRef100_P10053</text></svg>
<svg viewBox="0 -5 640 11"><use href="#t" x="52"/><path class="g" d="M52 0H355M357 0H523"/><use href="#t" x="346"/><use href="#ag" x="355"/><use href="#ag" x="523"/><text x="539" y="4">UniRef100_Q9ZRS5</text></svg>
<svg viewBox="0 -5 640 11"><use href="#t" x="10"/><path class="g" d="M10 0H392"/><use href="#ag" x="392"/><path class="n" d="M398 0H539"/><use href="#y" x="32"/><text x="539" y="4">UniRef100_Q106Y3</text></svg>
<svg viewBox="0 -5 640 11"><use href="#t" x="10"/><path class="g" d="M10 0H392"/><use href="#ag" x="392"/><use href="#y" x="32"/><text x="539" y="4">UniRef100_Q107A5</text></svg>
<svg viewBox="0 -5 640 11"><use href="#t" x="10"/><path class="g" d="M10 0H392"/><use href="#ag" x="392"/><path class="n" d="M398 0H539"/><use href="#y" x="32"/><text x="539" y="4">UniRef100_Q106Z6</text></svg>
<svg viewBox="0 -5 640 11"><use href="#t" x="10"/><path class="g" d="M10 0H392"/><use href="#ag" x="392"/><use href="#y" x="32"/><text x="539" y="4">UniRef100_Q106Z4</text></svg>
<svg viewBox="0 -5 640 11"><use href="#t" x="10"/><path class="g" d="M10 0H392"/><use href="#ag" x="392"/><path class="n" d="M398 0H539"/><use href="#y" x="32"/><text x="539" y="4">UniRef100_Q107B8</text></svg>
<svg viewBox="0 -5 640 11"><use href="#t" x="10"/><path class="g" d="M10 0H392"/><use href="#ag" x="392"/><use href="#y" x="32"/><text x="539" y="4">UniRef100_Q106Z3</text></svg>
<svg viewBox="0 -5 640 11"><path class="n" d="M10 0H31"/><use href="#t" x="31"/><path class="g" d="M31 0H355M357 0H523"/><use href="#t" x="346"/><use href="#ag" x="355"/><use href="#ag" x="523"/><path class="n" d="M529 0H539"/><text x="539" y="4">UniRef100_Q9FRZ4</text></svg>
<svg viewBox="0 -5 640 11"><use href="#t" x="84"/><path class="g" d="M84 0H355M357 0H523"/><use href="#t" x="346"/><use href="#ag" x="355"/><use href="#ag" x="523"/><text x="539" y="4">UniRef100_Q9ZSS5</text></svg>
<svg viewBox="0 -5 640 11"><path class="n" d="M10 0H84"/><use href="#t" x="84"/><path class="g" d="M84 0H355M357 0H523"/><use href="#t" x="346"/><use href="#ag" x="355"/><use href="#ag" x="523"/><path class="n" d="M529 0H539"/><text x="539" y="4">UniRef100_Q9SBU5</text></svg>
<svg viewBox="0 -5 640 11"><use href="#t" x="52"/><path class="g" d="M52 0H355M357 0H523"/><use href="#t" x="346"/><use href="#ag" x="355"/><use href="#ag" x="523"/><text x="539" y="4">UniRef100_Q38793</text></svg>
<svg viewBox="0 -5 640 11"><use href="#t" x="10"/><path class="g" d="M10 0H392"/><use href="#ag" x="392"/><path class="n" d="M398 0H539"/><use href="#y" x="32"/><text x="539" y="4">UniRef100_Q107B7</text></svg>
<svg viewBox="0 -5 640 11"><use href="#t" x="10"/><path class="g" d="M10 0H392"/><use href="#ag" x="392"/><use href="#y" x="32"/><text x="539" y="4">UniRef100_Q107B2</text></svg>
<svg viewBox="0 -5 640 11"><use href="#t" x="10"/><path class="g" d="M10 0H392"/><use href="#ag" x="392"/><path class="n" d="M398 0H539"/><use href="#y" x="32"/><text x="539" y="4">UniRef100_Q107A2</text></svg>
<svg viewBox="0 -5 640 11"><use href="#t" x="10"/><path class="g" d="M10 0H392"/><use href="#ag" x="392"/><use href="#y" x="32"/><text x="539" y="4">UniRef100_Q107A1</text></svg>
<svg viewBox="0 -5 640 11"><use href="#t" x="10"/><path class="g" d="M10 0H392"/><use href="#ag" x="392"/><path class="n" d="M398 0H539"/><use href="#y" x="32"/><text x="539" y="4">UniRef100_Q106Y4</text></svg>
<svg viewBox="0 -5 640 11"><use href="#t" x="52"/><path class="g" d="M52 0H355M357 0H523"/><use href="#t" x="346"/><use href="#ag" x="355"/><use href="#ag" x="523"/><text x="539" y="4">UniRef100_Q2QTJ7</text></svg>
<svg viewBox="0 -5 640 11"><path class="n" d="M10 0H31"/><use href="#t" x="31"/><path class="g" d="M31 0H355M357 0H523"/><use href="#t" x="346"/><use href="#ag" x="355"/><use href="#ag" x="523"/><path class="n" d="M529 0H539"/><text x="539" y="4">UniRef100_Q9FRZ2</text></svg>
<svg viewBox="0 -5 640 11"><use href="#t" x="52"/><path class="g" d="M52 0H355M357 0H523"/><use href="#t" x="346"/><use href="#ag" x="355"/><use href="#ag" x="523"/><text x="539" y="4">UniRef100_Q40004</text></svg>
<svg viewBox="0 -5 640 11"><path class="n" d="M10 0H31"/><use href="#t" x="31"/><path class="g" d="M31 0H355M357 0H523"/><use href="#t" x="346"/><use href="#ag" x="355"/><use href="#ag" x="523"/><path class="n" d="M529 0H539"/><text x="539" y="4">UniRef100_P00871</text></svg>
<svg viewBox="0 -5 640 11"><use href="#t" x="84"/><path class="g" d="M84 0H355M357 0H523"/><use href="#t" x="346"/><use href="#ag" x="355"/><use href="#ag" x="523"/><text x="539" y="4">UniRef100_Q9ZWG6</text></svg>
<svg viewBox="0 -5 640 11"><path class="n" d="M10 0H15"/><use href="#t" x="15"/><path class="c" d="M15 0H392"/><use href="#ac" x="392"/><path class="n" d="M398 0H539"/><use href="#y" x="35"/><text x="539" y="4">UniRef100_P18960</text></svg>
<svg viewBox="0 -5 640 11"><use href="#t" x="10"/><path class="m" d="M10 0H355"/><path class="c" d="M362 0H523"/><use href="#t" x="362"/><use href="#am" x="355"/><use href="#ac" x="523"/><use href="#y" x="33"/><use href="#y" x="92"/><text x="539" y="4">UniRef100_A9NM29</text></svg>
<svg viewBox="0 -5 640 11"><path class="n" d="M10 0H52"/><use href="#t" x="52"/><path class="g" d="M52 0H355M357 0H523"/><use href="#t" x="346"/><use href="#ag" x="355"/><use href="#ag" x="523"/><path class="n" d="M529 0H539"/><text x="539" y="4">UniRef100_Q22487</text></svg>
<svg viewBox="0 -5 640 11"><use href="#t" x="52"/><path class="g" d="M52 0H355M357 0H523"/><use href="#t" x="346"/><use href="#ag" x="355"/><use href="#ag" x="523"/><text x="539" y="4">UniRef100_P18566</text></svg>
<svg viewBox="0 -5 640 11"><path class="n" d="M10 0H84"/><use href="#t" x="84"/><path class="g" d="M84 0H355M357 0H523"/><use href="#t" x="346"/><use href="#ag" x="355"/><use href="#ag" x="523"/><path class="n" d="M529 0H539"/><text x="539" y="4">UniRef100_Q0INY7</text></svg>
<svg viewBox="0 -5 640 11"><use href="#t" x="84"/><path class="g" d="M84 0H355M357 0H523"/><use href="#t" x="346"/><use href="#ag" x="355"/><use href="#ag" x="523"/><text x="539" y="4">UniRef100_Q9ZSS1</text></svg>
<svg viewBox="0 -5 640 11"><path class="n" d="M10 0H84"/><use href="#t" x="84"/><path class="g" d="M84 0H355M357 0H523"/><use href="#t" x="346"/><use href="#ag" x="355"/><use href="#ag" x="523"/><path class="n" d="M529 0H539"/><text x="539" y="4">UniRef100_Q9ZSK0</text></svg>
<svg viewBox="0 -5 640 11"><use href="#t" x="84"/><path class="g" d="M84 0H355M357 0H523"/><use href="#t" x="346"/><use href="#ag" x="355"/><use href="#ag" x="523"/><text x="539" y="4">UniRef100_Q9SP00</text></svg>
<svg viewBox="0 -5 640 11"><path class="n" d="M10 0H84"/><use href="#t" x="84"/><path class="g" d="M84 0H355M357 0H523"/><use href="#t" x="346"/><use href="#ag" x="355"/><use href="#ag" x="523"/><path class="n" d="M529 0H539"/><text x="539" y="4">UniRef100_Q9SNZ6</text></svg>
<svg viewBox="0 -5 640 11"><use href="#t" x="84"/><path class="g" d="M84 0H355M357 0H523"/><use href="#t" x="346"/><use href="#ag" x="355"/><use href="#ag" x="523"/><text x="539" y="4">UniRef100_Q9SDY7</text></svg>
<svg viewBox="0 -5 640 11"><path class="n" d="M10 0H84"/><use href="#t" x="84"/><path class="g" d="M84 0H355M357 0H523"/><use href="#t" x="346"/><use href="#ag" x="355"/><use href="#ag" x="523"/><path class="n" d="M529 0H539"/><text x="539" y="4">UniRef100_Q9S7W0</text></svg>
<svg viewBox="0 -5 640 11"><use href="#t" x="84"/><path class="g" d="M84 0H355M357 0H523"/><use href="#t" x="346"/><use href="#ag" x="355"/><use href="#ag" x="523"/><text x="539" y="4">UniRef100_Q9ZWG3</text></svg>
<svg viewBox="0 -5 640 11"><path class="n" d="M10 0H84"/><use href="#t" x="84"/><path class="g" d="M84 0H355M357 0H523"/><use href="#t" x="346"/><use href="#ag" x="355"/><use href="#ag" x="523"/><path class="n" d="M529 0H539"/><text x="539" y="4">UniRef100_Q9SAW9</text></svg>
<svg viewBox="0 -5 640 11"><use href="#t" x="84"/><path class="g" d="M84 0H355M357 0H523"/><use href="#t" x="346"/><use href="#ag" x="355"/><use href="#ag" x="523"/><text x="539" y="4">UniRef100_Q9SAW8</text></svg>
<svg viewBox="0 -5 640 11"><path class="n" d="M10 0H84"/><use href="#t" x="84"/><path class="g" d="M84 0H355M357 0H523"/><use href="#t" x="346"/><use href="#ag" x="355"/><use href="#ag" x="523"/><path class="n" d="M529 0H539"/><text x="539" y="4">UniRef100_Q9SAW7</text></svg>
<svg viewBox="0 -5 640 11"><use href="#t" x="84"/><path class="g" d="M84 0H355M357 0H523"/><use href="#t" x="346"/><use href="#ag" x="355"/><use href="#ag" x="523"/><text x="539" y="4">UniRef100_Q9SAW6</text></svg>
<svg viewBox="0 -5 640 11"><path class="n" d="M10 0H84"/><use href="#t" x="84"/><path class="g" d="M84 0H355M357 0H523"/><use href="#t" x="346"/><use href="#ag" x="355"/><use href="#ag" x="523"/><path class="n" d="M529 0H539"/><text x="539" y="4">UniRef100_Q9SAW4</text></svg>
<svg viewBox="0 -5 640 11"><use href="#t" x="52"/><path class="g" d="M52 0H355M357 0H523"/><use href="#t" x="346"/><use href="#ag" x="355"/><use href="#ag" x="523"/><text x="539" y="4">UniRef100_A6N165</text></svg>
<svg viewBox="0 -5 640 11"><path class="n" d="M10 0H69"/><use href="#t" x="69"/><path class="c" d="M69 0H523"/><use href="#t" x="330"/><use href="#ac" x="392"/><use href="#ac" x="523"/><text x="539" y="4">UniRef100_Q39746</text></svg>
<svg viewBox="0 -5 640 11"><use href="#t" x="10"/><path class="m" d="M10 0H355"/><path class="c" d="M362 0H523"/><use href="#t" x="362"/><use href="#am" x="355"/><use href="#ac" x="523"/><use href="#y" x="33"/><use href="#y" x="90"/><path class="n" d="M529 0H539"/><text x="539" y="4">UniRef100_A9NLD6</text></svg>
<svg viewBox="0 -5 640 11"><use href="#t" x="10"/><path class="m" d="M10 0H355"/><path class="c" d="M362 0H523"/><use href="#t" x="362"/><use href="#am" x="355"/><use href="#ac" x="523"/><use href="#y" x="33"/><use href="#y" x="90"/><text x="539" y="4">UniRef100_A9NKU8</text></svg>
<svg viewBox="0 -5 640 11"><use href="#t" x="10"/><path class="m" d="M10 0H355"/><path class="c" d="M362 0H523"/><use href="#t" x="362"/><use href="#am" x="355"/><use href="#ac" x="523"/><use href="#y" x="39"/><use href="#y" x="90"/><path class="n" d="M529 0H539"/><text x="539" y="4">UniRef100_A9NMJ1</text></svg>
<svg viewBox="0 -5 640 11"><use href="#t" x="10"/><path class="m" d="M10 0H355"/><path class="c" d="M362 0H523"/><use href="#t" x="362"/><use href="#am" x="355"/><use href="#ac" x="523"/><use href="#y" x="33"/><use href="#y" x="90"/><text x="539" y="4">UniRef100_B8LMN2</text></svg>
<svg viewBox="0 -5 640 11"><use href="#t" x="31"/><path class="g" d="M31 0H355M357 0H523"/><use href="#t" x="346"/><use href="#ag" x="355"/><use href="#ag" x="523"/><text x="539" y="4">UniRef100_Q9ZRS6</text></svg>
<svg viewBox="0 -5 640 11"><path class="n" d="M10 0H84"/><use href="#t" x="84"/><path class="g" d="M84 0H355M357 0H523"/><use href="#t" x="346"/><use href="#ag" x="355"/><use href="#ag" x="523"/><path class="n" d="M529 0H539"/><text x="539" y="4">UniRef100_Q36688</text></svg>
<svg viewBox="0 -5 640 11"><use href="#t" x="84"/><path class="g" d="M84 0H355M357 0H523"/><use href="#t" x="346"/><use href="#ag" x="355"/><use href="#ag" x="523"/><text x="539" y="4">UniRef100_Q9SDY9</text></svg>
<svg viewBox="0 -5 640 11"><path class="n" d="M10 0H84"/><use href="#t" x="84"/><path class="g" d="M84 0H355M357 0H523"/><use href="#t" x="346"/><use href="#ag" x="355"/><use href="#ag" x="523"/><path class="n" d="M529 0H539"/><text x="539" y="4">UniRef100_Q9SAX5</text></svg>
<svg viewBox="0 -5 640 11"><use href="#t" x="84"/><path class="g" d="M84 0H355M357 0H523"/><use href="#t" x="346"/><use href="#ag" x="355"/><use href="#ag" x="523"/><text x="539" y="4">UniRef100_Q9S7N3</text></svg>
<svg viewBox="0 -5 640 11"><use href="#t" x="10"/><path class="g" d="M10 0H392"/><use href="#ag" x="392"/><path class="n" d="M398 0H539"/><use href="#y" x="32"/><text x="539" y="4">UniRef100_Q106Y5</text></svg>
<svg viewBox="0 -5 640 11"><use href="#t" x="84"/><path class="g" d="M84 0H355M357 0H523"/><use href="#t" x="346"/><use href="#ag" x="355"/><use href="#ag" x="523"/><text x="539" y="4">UniRef100_Q9ZWG7</text></svg>
<svg viewBox="0 -5 640 11"><path class="n" d="M10 0H84"/><use href="#t" x="84"/><path class="g" d="M84 0H355M357 0H523"/><use href="#t" x="346"/><use href="#ag" x="355"/><use href="#ag" x="523"/><path class="n" d="M529 0H539"/><text x="539" y="4">UniRef100_Q9SAX3</text></svg>
<svg viewBox="0 -5 640 11"><use href="#t" x="10"/><path class="m" d="M10 0H355"/><path class="c" d="M362 0H523"/><use href="#t" x="362"/><use href="#am" x="355"/><use href="#ac" x="523"/><use href="#y" x="33"/><use href="#y" x="90"/><text x="539" y="4">UniRef100_C0PQS9</text></svg>
<svg viewBox="0 -5 640 11"><path class="n" d="M10 0H84"/><use href="#t" x="84"/><path class="g" d="M84 0H355M357 0H523"/><use href="#t" x="346"/><use href="#ag" x="355"/><use href="#ag" x="523"/><path class="n" d="M529 0H539"/><text x="539" y="4">UniRef100_Q2QTJ1</text></svg>
<svg viewBox="0 -5 640 11"><use href="#t" x="31"/><path class="g" d="M31 0H355M357 0H523"/><use href="#t" x="346"/><use href="#ag" x="355"/><use href="#ag" x="523"/><text x="539" y="4">UniRef100_Q9FEE4</text></svg>
<svg viewBox="0 -5 640 11"><path class="n" d="M10 0H84"/><use href="#t" x="84"/><path class="g" d="M84 0H355M357 0H523"/><use href="#t" x="346"/><use href="#ag" x="355"/><use href="#ag" x="523"/><path class="n" d="M529 0H539"/><text x="539" y="4">UniRef100_Q9ZSS0</text></svg>
<svg viewBox="0 -5 640 11"><use href="#t" x="84"/><path class="g" d="M84 0H355M357 0H523"/><use href="#t" x="346"/><use href="#ag" x="355"/><use href="#ag" x="523"/><text x="539" y="4">UniRef100_Q9SDY8</text></svg>
<svg viewBox="0 -5 640 11"><use href="#t" x="10"/><path class="m" d="M10 0H355"/><path class="c" d="M362 0H523"/><use href="#t" x="362"/><use href="#am" x="355"/><use href="#ac" x="523"/><use href="#y" x="39"/><use href="#y" x="90"/><text x="539" y="4">UniRef100_A9NNZ8</text></svg>
<svg viewBox="0 -5 640 11"><use href="#t" x="10"/><path class="m" d="M10 0H355"/><path class="c" d="M362 0H523"/><use href="#t" x="362"/><use href="#am" x="355"/><use href="#ac" x="523"/><use href="#y" x="39"/><use href="#y" x="90"/><text x="539" y="4">UniRef100_A9NML5</text></svg>
<svg viewBox="0 -5 640 11"><path class="n" d="M10 0H84"/><use href="#t" x="84"/><path class="g" d="M84 0H355M357 0H523"/><use href="#t" x="346"/><use href="#ag" x="355"/><use href="#ag" x="523"/><path class="n" d="M529 0H539"/><text x="539" y="4">UniRef100_Q9ZWG9</text></svg>
<svg viewBox="0 -5 640 11"><use href="#t" x="84"/><path class="g" d="M84 0H355M357 0H523"/><use href="#t" x="346"/><use href="#ag" x="355"/><use href="#ag" x="523"/><text x="539" y="4">UniRef100_Q9SAX6</text></svg>
<svg viewBox="0 -5 640 11"><path class="n" d="M10 0H84"/><use href="#t" x="84"/><path class="g" d="M84 0H355M357 0H523"/><use href="#t" x="346"/><use href="#ag" x="355"/><use href="#ag" x="523"/><path class="n" d="M529 0H539"/><text x="539" y="4">UniRef100_Q9SAX1</text></svg>
<svg viewBox="0 -5 640 11"><use href="#t" x="84"/><path class="g" d="M84 0H355M357 0H523"/><use href="#ag" x="355"/><use href="#ag" x="523"/><text x="539" y="4">UniRef100_Q575T3</text></svg>
<svg viewBox="0 -5 640 11"><path class="n" d="M10 0H84"/><use href="#t" x="84"/><path class="g" d="M84 0H355M357 0H523"/><use href="#t" x="346"/><use href="#ag" x="355"/><use href="#ag" x="523"/><path class="n" d="M529 0H539"/><text x="539" y="4">UniRef100_Q9ZSS2</text></svg>
<svg viewBox="0 -5 640 11"><use href="#t" x="84"/><path class="g" d="M84 0H355M357 0H523"/><use href="#t" x="346"/><use href="#ag" x="355"/><use href="#ag" x="523"/><text x="539" y="4">UniRef100_Q9ZWG4</text></svg>
<svg viewBox="0 -5 640 11"><path class="n" d="M10 0H110"/><use href="#t" x="110"/><path class="g" d="M110 0H355M357 0H523"/><use href="#t" x="346"/><use href="#ag" x="355"/><use href="#ag" x="523"/><path class="n" d="M529 0H539"/><text x="539" y="4">UniRef100_Q41582</text></svg>
<svg viewBox="0 -5 640 11"><use href="#t" x="31"/><path class="g" d="M31 0H355M357 0H523"/><use href="#t" x="346"/><use href="#ag" x="355"/><use href="#ag" x="523"/><text x="539" y="4">UniRef100_P26667</text></svg>
<svg viewBox="0 -5 640 11"><path class="n" d="M10 0H84"/><use href="#t" x="84"/><path class="g" d="M84 0H355M357 0H523"/><use href="#t" x="346"/><use href="#ag" x="355"/><use href="#ag" x="523"/><path class="n" d="M529 0H539"/><text x="539" y="4">UniRef100_Q9SNZ8</text></svg>
<svg viewBox="0 -5 640 11"><use href="#t" x="69"/><path class="c" d="M69 0H523"/><use href="#t" x="330"/><use href="#ac" x="392"/><use href="#ac" x="523"/><text x="539" y="4">UniRef100_Q39744</text></svg>
<svg viewBox="0 -5 640 11"><path class="n" d="M10 0H31"/><use href="#t" x="31"/><path class="g" d="M31 0H355M357 0H523"/><use href="#t" x="346"/><use href="#ag" x="355"/><use href="#ag" x="523"/><path class="n" d="M529 0H539"/><text x="539" y="4">UniRef100_Q9FRZ5</text></svg>
<svg viewBox="0 -5 640 11"><use href="#t" x="84"/><path class="g" d="M84 0H355M357 0H523"/><use href="#t" x="346"/><use href="#ag" x="355"/><use href="#ag" x="523"/><text x="539" y="4">UniRef100_Q9SNZ7</text></svg>
<svg viewBox="0 -5 640 11"><path class="n" d="M10 0H84"/><use href="#t" x="84"/><path class="g" d="M84 0H355M357 0H523"/><use href="#t" x="346"/><use href="#ag" x="355"/><use href="#ag" x="523"/><path class="n" d="M529 0H539"/><text x="539" y="4">UniRef100_Q9SNW4</text></svg>
<svg viewBox="0 -5 640 11"><use href="#t" x="84"/><path class="g" d="M84 0H355M357 0H523"/><use href="#t" x="346"/><use href="#ag" x="355"/><use href="#ag" x="523"/><text x="539" y="4">UniRef100_Q9ZWH4</text></svg>
<svg viewBox="0 -5 640 11"><path class="n" d="M10 0H84"/><use href="#t" x="84"/><path class="g" d="M84 0H355M357 0H523"/><use href="#t" x="346"/><use href="#ag" x="355"/><use href="#ag" x="523"/><path class="n" d="M529 0H539"/><text x="539" y="4">UniRef100_Q9SAX8</text></svg>
<svg viewBox="0 -5 640 11"><use href="#t" x="84"/><path class="g" d="M84 0H355M357 0H523"/><use href="#t" x="346"/><use href="#ag" x="355"/><use href="#ag" x="523"/><text x="539" y="4">UniRef100_Q9SAX7</text></svg>
<svg viewBox="0 -5 640 11"><path class="n" d="M10 0H84"/><use href="#t" x="84"/><path class="g" d="M84 0H355M357 0H523"/><use href="#t" x="346"/><use href="#ag" x="355"/><use href="#ag" x="523"/><path class="n" d="M529 0H539"/><text x="539" y="4">UniRef100_Q9S800</text></svg>
<svg viewBox="0 -5 640 11"><use href="#t" x="211"/><path class="c" d="M211 0H355"/><path class="g" d="M357 0H523"/><use href="#t" x="341"/><use href="#ac" x="355"/><use href="#ag" x="523"/><text x="539" y="4">UniRef100_Q9ZRI4</text></svg>
<svg viewBox="0 -5 640 11"><use href="#t" x="10"/><path class="g" d="M10 0H392"/><use href="#ag" x="392"/><path class="n" d="M398 0H539"/><use href="#y" x="32"/><text x="539" y="4">UniRef100_Q107A7</text></svg>
<svg viewBox="0 -5 640 11"><use href="#t" x="15"/><path class="g" d="M15 0H346"/><path class="c" d="M346 0H523"/><use href="#t" x="346"/><use href="#ac" x="392"/><use href="#ac" x="523"/><use href="#y" x="35"/><text x="539" y="4">UniRef100_C1JZ18</text></svg>
<svg viewBox="0 -5 640 11"><use href="#t" x="10"/><path class="m" d="M10 0H346"/><path class="g" d="M346 0H355M357 0H523"/><use href="#t" x="346"/><use href="#am" x="355"/><use href="#ag" x="523"/><use href="#y" x="40"/><use href="#y" x="90"/><path class="n" d="M529 0H539"/><text x="539" y="4">UniRef100_P16031</text></svg>
<svg viewBox="0 -5 640 11"><use href="#t" x="84"/><path class="g" d="M84 0H355M357 0H523"/><use href="#t" x="346"/><use href="#ag" x="355"/><use href="#ag" x="523"/><text x="539" y="4">UniRef100_A2ZJQ0</text></svg>
<svg viewBox="0 -5 640 11"><path class="n" d="M10 0H84"/><use href="#t" x="84"/><path class="g" d="M84 0H355M357 0H523"/><use href="#t" x="346"/><use href="#ag" x="355"/><use href="#ag" x="523"/><text x="539" y="4">UniRef100_A6N1N8</text></svg>
<svg viewBox="0 -5 640 11"><use href="#t" x="10"/><path class="g" d="M10 0H392"/><use href="#ag" x="392"/><use href="#y" x="32"/><text x="539" y="4">UniRef100_Q106Z5</text></svg>
<svg viewBox="0 -5 640 11"><use href="#t" x="10"/><path class="g" d="M10 0H392"/><use href="#ag" x="392"/><path class="n" d="M398 0H539"/><use href="#y" x="32"/><text x="539" y="4">UniRef100_A5JPN4</text></svg>
<svg viewBox="0 -5 640 11"><use href="#t" x="10"/><path class="g" d="M10 0H392"/><use href="#ag" x="392"/><use href="#y" x="32"/><text x="539" y="4">UniRef100_O24045</text></svg>
<svg viewBox="0 -5 640 11"><path class="n" d="M10 0H15"/><use href="#t" x="15"/><path class="m" d="M15 0H355"/><path class="c" d="M362 0H523"/><use href="#t" x="362"/><use href="#am" x="355"/><use href="#ac" x="523"/><use href="#y" x="40"/><use href="#y" x="94"/><path class="n" d="M529 0H539"/><text x="539" y="4">UniRef100_A9NL36</text></svg>
<svg viewBox="0 -5 640 11"><use href="#t" x="15"/><path class="m" d="M15 0H355"/><path class="c" d="M362 0H523"/><use href="#t" x="362"/><use href="#am" x="355"/><use href="#ac" x="523"/><use href="#y" x="40"/><use href="#y" x="94"/><text x="539" y="4">UniRef100_A9NYP8</text></svg>
<svg viewBox="0 -5 640 11"><path class="n" d="M10 0H25"/><use href="#t" x="25"/><path class="g" d="M25 0H330"/><path class="c" d="M330 0H523"/><use href="#t" x="330"/><use href="#ac" x="392"/><use href="#ac" x="523"/><path class="n" d="M529 0H539"/><text x="539" y="4">UniRef100_Q39749</text></svg>
<svg viewBox="0 -5 640 11"><use href="#t" x="10"/><path class="m" d="M10 0H355"/><path class="c" d="M362 0H523"/><use href="#t" x="362"/><use href="#am" x="355"/><use href="#ac" x="523"/><use href="#y" x="33"/><use href="#y" x="90"/><text x="539" y="4">UniRef100_C0PR41</text></svg>
<svg viewBox="0 -5 640 11"><path class="n" d="M10 0H25"/><use href="#t" x="25"/><path class="g" d="M25 0H330"/><path class="c" d="M330 0H523"/><use href="#t" x="330"/><use href="#ac" x="392"/><use href="#ac" x="523"/><path class="n" d="M529 0H539"/><text x="539" y="4">UniRef100_Q39747</text></svg>
<svg viewBox="0 -5 640 11"><use href="#t" x="25"/><path class="g" d="M25 0H330"/><path class="c" d="M330 0H523"/><use href="#t" x="330"/><use href="#ac" x="392"/><use href="#ac" x="523"/><text x="539" y="4">UniRef100_Q39745</text></svg>
<svg viewBox="0 -5 640 11"><path class="n" d="M10 0H84"/><use href="#t" x="84"/><path class="g" d="M84 0H355M357 0H523"/><use href="#t" x="346"/><use href="#ag" x="355"/><use href="#ag" x="523"/><path class="n" d="M529 0H539"/><text x="539" y="4">UniRef100_Q9SAX2</text></svg>
<svg viewBox="0 -5 640 11"><use href="#t" x="10"/><path class="g" d="M10 0H392"/><use href="#ag" x="392"/><use href="#y" x="33"/><text x="539" y="4">UniRef100_Q107B6</text></svg>
<svg viewBox="0 -5 640 11"><use href="#t" x="10"/><path class="g" d="M10 0H392"/><use href="#ag" x="392"/><path class="n" d="M398 0H539"/><use href="#y" x="33"/><text x="539" y="4">UniRef100_Q107B5</text></svg>
<svg viewBox="0 -5 640 11"><use href="#t" x="255"/><path class="c" d="M255 0H355M357 0H523"/><use href="#t" x="330"/><use href="#ac" x="355"/><use href="#ac" x="523"/><text x="539" y="4">UniRef100_Q9AUJ5</text></svg>
<svg viewBox="0 -5 640 11"><path class="n" d="M10 0H31"/><use href="#t" x="31"/><path class="g" d="M31 0H355M357 0H523"/><use href="#t" x="346"/><use href="#ag" x="355"/><use href="#ag" x="523"/><path class="n" d="M529 0H539"/><text x="539" y="4">UniRef100_Q9FRZ3</text></svg>
<svg viewBox="0 -5 640 11"><use href="#t" x="84"/><path class="g" d="M84 0H355M357 0H523"/><use href="#t" x="346"/><use href="#ag" x="355"/><use href="#ag" x="523"/><text x="539" y="4">UniRef100_Q9ZWG2</text></svg>
<svg viewBox="0 -5 640 11"><path class="n" d="M10 0H69"/><use href="#t" x="69"/><path class="g" d="M69 0H404"/><use href="#ag" x="404"/><path class="n" d="M410 0H539"/><text x="539" y="4">UniRef100_Q9FXM1</text></svg>
<svg viewBox="0 -5 640 11"><use href="#t" x="255"/><path class="c" d="M255 0H355M357 0H523"/><use href="#t" x="341"/><use href="#ac" x="355"/><use href="#ac" x="523"/><text x="539" y="4">UniRef100_Q9AUJ3</text></svg>
<svg viewBox="0 -5 640 11"><path class="n" d="M10 0H255"/><use href="#t" x="255"/><path class="c" d="M255 0H355M357 0H523"/><use href="#t" x="341"/><use href="#ac" x="355"/><use href="#ac" x="523"/><path class="n" d="M529 0H539"/><text x="539" y="4">UniRef100_Q9AQX3</text></svg>
<svg viewBox="0 -5 640 11"><use href="#t" x="10"/><path class="g" d="M10 0H392"/><use href="#ag" x="392"/><use href="#y" x="33"/><text x="539" y="4">UniRef100_Q107B1</text></svg>
<svg viewBox="0 -5 640 11"><path class="n" d="M10 0H25"/><use href="#t" x="25"/><path class="g" d="M25 0H392"/><use href="#ag" x="392"/><path class="n" d="M398 0H539"/><use href="#y" x="46"/><text x="539" y="4">UniRef100_O22645</text></svg>
<svg viewBox="0 -5 640 11"><use href="#t" x="10"/><path class="g" d="M10 0H392"/><use href="#ag" x="392"/><use href="#y" x="33"/><text x="539" y="4">UniRef100_O24634</text></svg>
<svg viewBox="0 -5 640 11"><path class="n" d="M10 0H25"/><use href="#t" x="25"/><path class="g" d="M25 0H392"/><use href="#ag" x="392"/><path class="n" d="M398 0H539"/><use href="#y" x="46"/><text x="539" y="4">UniRef100_O22573</text></svg>
<svg viewBox="0 -5 640 11"><use href="#t" x="25"/><path class="g" d="M25 0H392"/><use href="#ag" x="392"/><use href="#y" x="46"/><text x="539" y="4">UniRef100_O22572</text></svg>
<svg viewBox="0 -5 640 11"><path class="n" d="M10 0H95"/><use href="#t" x="95"/><path class="g" d="M95 0H355"/><path class="c" d="M362 0H523"/><use href="#t" x="362"/><use href="#ag" x="355"/><use href="#ac" x="523"/><use href="#y" x="147"/><text x="539" y="4">UniRef100_Q42900</text></svg>
<svg viewBox="0 -5 640 11"><use href="#t" x="20"/><path class="g" d="M20 0H392"/><use href="#ag" x="392"/><use href="#y" x="40"/><text x="539" y="4">UniRef100_Q9S7X1</text></svg>
<svg viewBox="0 -5 640 11"><path class="n" d="M10 0H20"/><use href="#t" x="20"/><path class="g" d="M20 0H392"/><use href="#ag" x="392"/><path class="n" d="M398 0H539"/><use href="#y" x="40"/><text x="539" y="4">UniRef100_O49130</text></svg>
<svg viewBox="0 -5 640 11"><use href="#t" x="20"/><path class="g" d="M20 0H392"/><use href="#ag" x="392"/><use href="#y" x="40"/><text x="539" y="4">UniRef100_O49129</text></svg>
<svg viewBox="0 -5 640 11"><path class="n" d="M10 0H255"/><use href="#t" x="255"/><path class="c" d="M255 0H355M357 0H523"/><use href="#t" x="341"/><use href="#ac" x="355"/><use href="#ac" x="523"/><path class="n" d="M529 0H539"/><text x="539" y="4">UniRef100_Q9AUJ2</text></svg>
<svg viewBox="0 -5 640 11"><use href="#t" x="20"/><path class="g" d="M20 0H392"/><use href="#ag" x="392"/><use href="#y" x="40"/><text x="539" y="4">UniRef100_O50053</text></svg>
<svg viewBox="0 -5 640 11"><path class="n" d="M10 0H20"/><use href="#t" x="20"/><path class="g" d="M20 0H392"/><use href="#ag" x="392"/><path class="n" d="M398 0H539"/><use href="#y" x="40"/><text x="539" y="4">UniRef100_O49131</text></svg>
<svg viewBox="0 -5 640 11"><use href="#t" x="20"/><path class="g" d="M20 0H392"/><use href="#ag" x="392"/><use href="#y" x="40"/><text x="539" y="4">UniRef100_O49128</text></svg>
<svg viewBox="0 -5 640 11"><path class="n" d="M10 0H142"/><use href="#t" x="142"/><path class="g" d="M142 0H355M357 0H523"/><use href="#t" x="346"/><use href="#ag" x="355"/><use href="#ag" x="523"/><path class="n" d="M529 0H539"/><text x="539" y="4">UniRef100_A6N149</text></svg>
<svg viewBox="0 -5 640 11"><use href="#t" x="233"/><path class="c" d="M233 0H355"/><path class="g" d="M357 0H523"/><use href="#t" x="341"/><use href="#ac" x="355"/><use href="#ag" x="523"/><text x="539" y="4">UniRef100_P00868</text></svg>
<svg viewBox="0 -5 640 11"><path class="n" d="M10 0H233"/><use href="#t" x="233"/><path class="c" d="M233 0H355"/><path class="g" d="M357 0H523"/><use href="#t" x="341"/><use href="#ac" x="355"/><use href="#ag" x="523"/><path class="n" d="M529 0H539"/><text x="539" y="4">UniRef100_Q7DM38</text></svg>
<svg viewBox="0 -5 640 11"><use href="#t" x="41"/><path class="g" d="M41 0H355"/><path class="c" d="M378 0H523"/><use href="#t" x="378"/><use href="#ag" x="355"/><use href="#ac" x="523"/><text x="539" y="4">UniRef100_Q9SXH1</text></svg>
<svg viewBox="0 -5 640 11"><use href="#t" x="10"/><path class="m" d="M10 0H355"/><path class="n" d="M361 0H378"/><path class="c" d="M378 0H523"/><use href="#t" x="378"/><use href="#am" x="355"/><use href="#ac" x="523"/><path class="n" d="M529 0H539"/><text x="539" y="4">UniRef100_A9RJ57</text></svg>
<svg viewBox="0 -5 640 11"><use href="#t" x="255"/><path class="c" d="M255 0H355"/><path class="g" d="M357 0H523"/><use href="#t" x="330"/><use href="#ac" x="355"/><use href="#ag" x="523"/><text x="539" y="4">UniRef100_Q9AUJ4</text></svg>
<svg viewBox="0 -5 640 11"><use href="#t" x="10"/><path class="g" d="M10 0H298"/><use href="#ag" x="298"/><path class="n" d="M304 0H539"/><use href="#y" x="32"/><text x="539" y="4">UniRef100_B0ZSC8</text></svg>
<svg viewBox="0 -5 640 11"><use href="#t" x="10"/><path class="m" d="M10 0H330"/><path class="g" d="M330 0H355M357 0H523"/><use href="#t" x="330"/><use href="#ag" x="355"/><use href="#ag" x="523"/><use href="#y" x="40"/><text x="539" y="4">UniRef100_A9NXP2</text></svg>
<svg viewBox="0 -5 640 11"><use href="#t" x="10"/><path class="m" d="M10 0H355"/><path class="n" d="M361 0H378"/><path class="c" d="M378 0H523"/><use href="#t" x="378"/><use href="#am" x="355"/><use href="#ac" x="523"/><path class="n" d="M529 0H539"/><text x="539" y="4">UniRef100_A9RG04</text></svg>
<svg viewBox="0 -5 640 11"><use href="#t" x="15"/><path class="m" d="M15 0H355"/><path class="c" d="M378 0H523"/><use href="#t" x="378"/><use href="#am" x="355"/><use href="#ac" x="523"/><path class="n" d="M529 0H539"/><text x="539" y="4">UniRef100_A9S8M9</text></svg>
<svg viewBox="0 -5 640 11"><path class="n" d="M10 0H15"/><use href="#t" x="15"/><path class="m" d="M15 0H355"/><path class="n" d="M361 0H378"/><path class="c" d="M378 0H523"/><use href="#t" x="378"/><use href="#am" x="355"/><use href="#ac" x="523"/><path class="n" d="M529 0H539"/><text x="539" y="4">UniRef100_A9S8M6</text></svg>
</div>
</body></html>
